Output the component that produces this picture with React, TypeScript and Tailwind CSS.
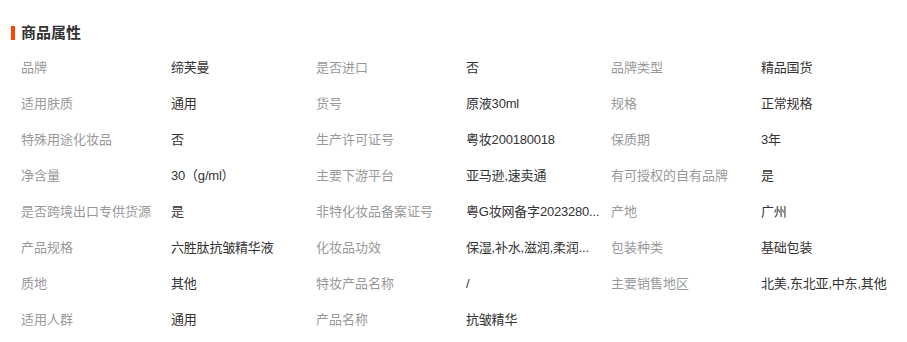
import React from 'react';

const attrs: [string, string][] = [
  ['品牌', '缔芙曼'],
  ['是否进口', '否'],
  ['品牌类型', '精品国货'],
  ['适用肤质', '通用'],
  ['货号', '原液30ml'],
  ['规格', '正常规格'],
  ['特殊用途化妆品', '否'],
  ['生产许可证号', '粤妆200180018'],
  ['保质期', '3年'],
  ['净含量', '30（g/ml）'],
  ['主要下游平台', '亚马逊,速卖通'],
  ['有可授权的自有品牌', '是'],
  ['是否跨境出口专供货源', '是'],
  ['非特化妆品备案证号', '粤G妆网备字2023280...'],
  ['产地', '广州'],
  ['产品规格', '六胜肽抗皱精华液'],
  ['化妆品功效', '保湿,补水,滋润,柔润...'],
  ['包装种类', '基础包装'],
  ['质地', '其他'],
  ['特妆产品名称', '/'],
  ['主要销售地区', '北美,东北亚,中东,其他'],
  ['适用人群', '通用'],
  ['产品名称', '抗皱精华'],
];

const App: React.FC = () => {
  return (
    <div
      className="w-[907px] h-[342px] bg-white overflow-hidden pt-6"
      style={{ fontFamily: '"Liberation Sans", "Noto Sans CJK SC", sans-serif' }}
    >
      <div className="flex items-center h-[18px] pl-[11px]">
        <div className="w-[4px] h-[14px] bg-[#ff4400]"></div>
        <h3 className="ml-[6px] text-[15px] font-bold text-[#333] leading-[18px]">商品属性</h3>
      </div>
      <div className="mt-2 pl-[21px] grid grid-cols-[150px_145px_150px_145px_150px_146px]">
        {attrs.map(([label, value]) => (
          <React.Fragment key={label}>
            <div className="h-9 flex items-center text-[13px] text-[#999] whitespace-nowrap">{label}</div>
            <div className="h-9 flex items-center text-[13px] text-[#333] whitespace-nowrap tracking-[-0.2px]">
              {value}
            </div>
          </React.Fragment>
        ))}
      </div>
    </div>
  );
};

export default App;
